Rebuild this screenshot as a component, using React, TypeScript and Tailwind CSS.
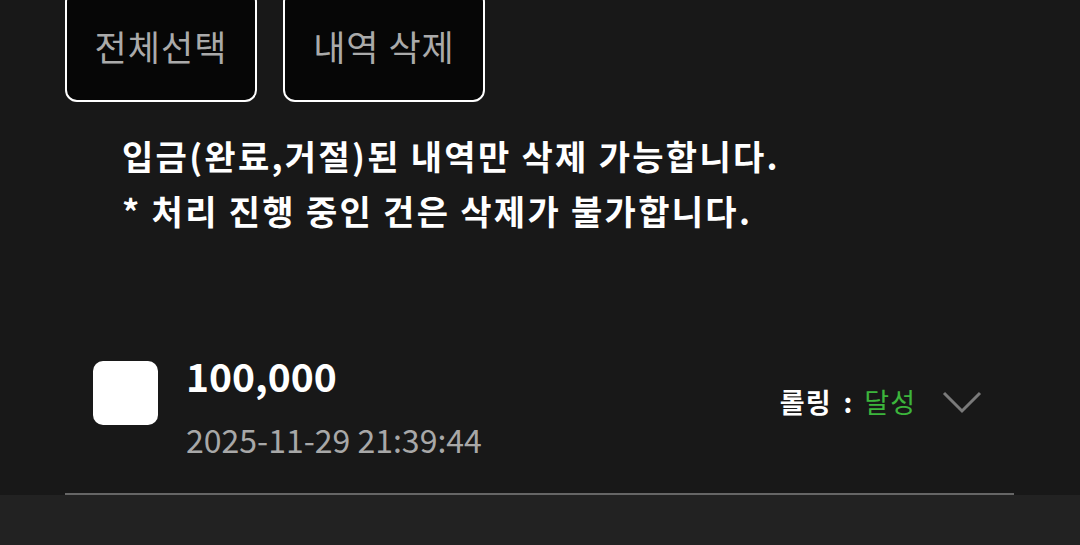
import React from "react";

const font = { fontFamily: '"Noto Sans CJK KR", "Noto Sans", sans-serif' };

export default function App() {
  return (
    <div className="w-[1080px] h-[545px] bg-[#181818] flex flex-col overflow-hidden" style={font}>
      <div className="flex gap-[26px] pl-[65px] -mt-[10px]">
        <button className="w-[192px] h-[112px] rounded-[12px] border-2 border-white bg-[#060606] text-[#aaaaaa] text-[35px] tracking-[1px] flex items-center justify-center">
          전체선택
        </button>
        <button className="w-[202px] h-[112px] rounded-[12px] border-2 border-white bg-[#060606] text-[#aaaaaa] text-[35px] tracking-[1px] flex items-center justify-center">
          내역 삭제
        </button>
      </div>
      <div className="pl-[122px] mt-[26px] text-white font-bold text-[34px] tracking-[2.3px] leading-[55px]">
        <p>입금(완료,거절)된 내역만 삭제 가능합니다.</p>
        <p>* 처리 진행 중인 건은 삭제가 불가합니다.</p>
      </div>
      <div className="flex-1" />
      <div className="flex items-start pl-[93px] pr-[98px]">
        <div className="w-[65px] h-[64px] rounded-[10px] bg-white" />
        <div className="ml-[28px] flex flex-col -mt-[4px]">
          <span className="text-white font-bold text-[39px] leading-[36px]">100,000</span>
          <span className="text-[#a8a8a8] text-[32px] leading-[46px] mt-[23px]">2025-11-29 21:39:44</span>
        </div>
        <div className="ml-auto flex items-center mt-[21px]">
          <span className="text-white font-bold text-[27px] tracking-[1px]">롤링</span>
          <span className="text-white font-bold text-[27px] ml-[12px]">:</span>
          <span className="text-[#3cb53c] text-[27px] tracking-[1px] ml-[12px]">달성</span>
          <svg width="40" height="24" viewBox="0 0 40 24" className="ml-[26px]">
            <path d="M2 3 L20 21 L38 3" fill="none" stroke="#7a7a7a" strokeWidth="3" />
          </svg>
        </div>
      </div>
      <div className="mt-[31px] mx-[65px] h-[2px] bg-[#666666] w-[949px]" />
      <div className="h-[50px] bg-[#222222]" />
    </div>
  );
}
